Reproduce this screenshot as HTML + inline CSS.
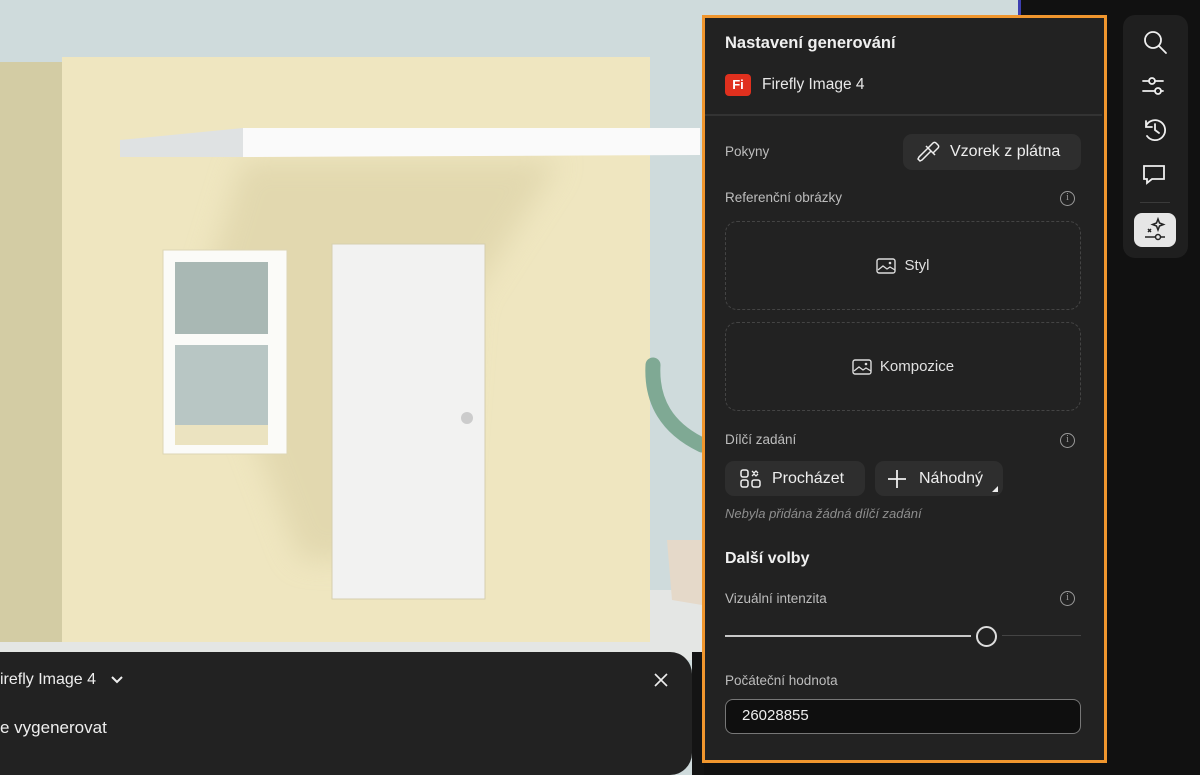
<!DOCTYPE html>
<html><head><meta charset="utf-8"><style>
*{margin:0;padding:0;box-sizing:border-box}
body{width:1200px;height:775px;overflow:hidden;background:#111;font-family:"Liberation Sans",sans-serif;position:relative;color:#e8e8e8}
.a{position:absolute}
.lbl{font-size:13.5px;color:#bdbdbd}
.info{width:15px;height:15px;border:1.3px solid #9a9a9a;border-radius:50%;font-size:10px;color:#9a9a9a;text-align:center;line-height:12px;font-family:"Liberation Serif",serif}
.btn{background:#2e2e2e;border-radius:9px;font-size:16px;color:#eee;display:flex;align-items:center}
.drop{border:1.5px dashed #444;border-radius:12px;display:flex;align-items:center;justify-content:center;font-size:15px;color:#e0e0e0;gap:8px}
</style></head><body>
<div class="a" style="left:700px;top:0;width:318px;height:20px;background:#cfdbdc"></div>
<svg class="a" style="left:0;top:0" width="702" height="775" viewBox="0 0 702 775">
<defs><filter id="b"><feGaussianBlur stdDeviation="14"/></filter></defs>
<rect width="702" height="775" fill="#cfdbdc"/>
<rect x="0" y="590" width="702" height="70" fill="#e4e6e4"/>
<rect x="0" y="62" width="64" height="580" fill="#d3cca4"/>
<rect x="62" y="57" width="588" height="585" fill="#efe6c0"/>
<polygon points="243,160 560,160 470,300 450,560 300,560 200,300" fill="#ddd3a8" opacity="0.7" filter="url(#b)"/>
<polygon points="120,140 243,128 243,157 120,157" fill="#dfe2e3"/>
<polygon points="243,128 700,128 700,155 243,157" fill="#fafafa"/>
<rect x="163" y="250" width="124" height="204" fill="#fbfbf8" stroke="#ddd6b5"/>
<rect x="175" y="262" width="93" height="72" fill="#a9b8b4"/>
<rect x="175" y="345" width="93" height="80" fill="#b8c6c4"/>
<rect x="175" y="425" width="93" height="20" fill="#ebe3c0"/>
<rect x="332" y="244" width="153" height="355" fill="#f2f2f1" stroke="#d6cfae"/>
<circle cx="467" cy="418" r="6" fill="#ccc"/>
<path d="M653 365 Q650 420 702 445" stroke="#7fa994" stroke-width="15" fill="none" stroke-linecap="round"/>
<path d="M667 540 L702 540 L702 605 L672 600 Z" fill="#e5d9c9"/>
<rect x="0" y="652" width="692" height="123" rx="22" fill="#222"/>
<rect x="0" y="652" width="40" height="123" fill="#222"/>
</svg>
<div class="a" style="left:692px;top:652px;width:12px;height:123px;background:#141414"></div>
<div class="a" style="left:1018px;top:0;width:3px;height:15px;background:#3d3fb0"></div>
<div class="a" style="left:0;top:671px;font-size:16px;color:#eee">irefly Image 4</div>
<svg class="a" style="left:110px;top:675px" width="14" height="10"><path d="M2 2 L7 7 L12 2" stroke="#eee" stroke-width="2" fill="none"/></svg>
<div class="a" style="left:0;top:718px;font-size:17px;color:#eee">e vygenerovat</div>
<svg class="a" style="left:653px;top:672px" width="16" height="16"><path d="M2 2L14 14M14 2L2 14" stroke="#eee" stroke-width="1.6"/></svg>

<div class="a" style="left:702px;top:15px;width:405px;height:748px;background:#222;border:3px solid #f0962e"></div>
<div class="a" style="left:725px;top:34px;font-size:16.5px;font-weight:bold;color:#f0f0f0">Nastavení generování</div>
<div class="a" style="left:725px;top:74px;width:26px;height:22px;background:#e0301e;border-radius:4px;color:#fff;font-weight:bold;font-size:13px;text-align:center;line-height:22px">Fi</div>
<div class="a" style="left:762px;top:76px;font-size:15.5px;color:#e8e8e8">Firefly Image 4</div>
<div class="a" style="left:705px;top:114px;width:397px;height:2px;background:#333"></div>
<div class="a lbl" style="left:725px;top:144px">Pokyny</div>
<div class="a btn" style="left:903px;top:134px;width:178px;height:36px;padding-left:14px;gap:9px">
<svg width="24" height="24" viewBox="0 0 24 24"><path d="M3 21l2-1 9-9-3-3-9 9-1 2z M11 8l5-5a2 2 0 0 1 3 0l2 2a2 2 0 0 1 0 3l-5 5z M9 6l9 9" stroke="#eee" stroke-width="1.5" fill="none"/></svg>Vzorek z plátna</div>
<div class="a lbl" style="left:725px;top:190px">Referenční obrázky</div>
<div class="a info" style="left:1060px;top:191px">i</div>
<div class="a drop" style="left:725px;top:221px;width:356px;height:89px"><svg width="20" height="16"><rect x="1" y="1" width="18" height="14" rx="2" stroke="#ddd" stroke-width="1.4" fill="none"/><path d="M2 12l5-4 4 3 3-2 5 3" stroke="#ddd" stroke-width="1.3" fill="none"/><circle cx="14" cy="5" r="1.3" fill="#ddd"/></svg>Styl</div>
<div class="a drop" style="left:725px;top:322px;width:356px;height:89px"><svg width="20" height="16"><rect x="1" y="1" width="18" height="14" rx="2" stroke="#ddd" stroke-width="1.4" fill="none"/><path d="M2 12l5-4 4 3 3-2 5 3" stroke="#ddd" stroke-width="1.3" fill="none"/><circle cx="14" cy="5" r="1.3" fill="#ddd"/></svg>Kompozice</div>
<div class="a lbl" style="left:725px;top:432px">Dílčí zadání</div>
<div class="a info" style="left:1060px;top:433px">i</div>
<div class="a btn" style="left:725px;top:461px;width:140px;height:35px;padding-left:15px;gap:10px"><svg width="22" height="20"><rect x="1" y="1" width="7" height="7" rx="2" stroke="#eee" stroke-width="1.5" fill="none"/><rect x="1" y="11" width="7" height="7" rx="2" stroke="#eee" stroke-width="1.5" fill="none"/><rect x="12" y="11" width="8" height="7" rx="2" stroke="#eee" stroke-width="1.5" fill="none"/><path d="M12 2l2 2 2-2 2 2M12 7l2-2 2 2 2-2" stroke="#eee" stroke-width="1.3" fill="none"/></svg>Procházet</div>
<div class="a btn" style="left:875px;top:461px;width:128px;height:35px;padding-left:12px;gap:12px"><svg width="20" height="20"><path d="M10 1v18M1 10h18" stroke="#eee" stroke-width="1.8"/></svg>Náhodný</div>
<div class="a" style="left:992px;top:486px;width:0;height:0;border-left:6px solid transparent;border-bottom:6px solid #eee"></div>
<div class="a" style="left:725px;top:506px;font-size:13px;font-style:italic;color:#8e8e8e">Nebyla přidána žádná dílčí zadání</div>
<div class="a" style="left:725px;top:550px;font-size:16px;font-weight:bold;color:#f0f0f0">Další volby</div>
<div class="a lbl" style="left:725px;top:591px">Vizuální intenzita</div>
<div class="a info" style="left:1060px;top:591px">i</div>
<div class="a" style="left:725px;top:635px;width:246px;height:2px;background:#c8c8c8"></div>
<div class="a" style="left:1002px;top:635px;width:79px;height:1px;background:#444"></div>
<div class="a" style="left:976px;top:626px;width:21px;height:21px;border:2.5px solid #ddd;border-radius:50%;background:#222"></div>
<div class="a lbl" style="left:725px;top:673px">Počáteční hodnota</div>
<div class="a" style="left:725px;top:699px;width:356px;height:35px;background:#0f0f0f;border:1px solid #777;border-radius:8px;font-size:15px;color:#eee;padding:7px 0 0 16px">26028855</div>

<div class="a" style="left:1123px;top:15px;width:65px;height:243px;background:#1f1f1f;border-radius:12px"></div>
<svg class="a" style="left:1140px;top:28px" width="30" height="230" viewBox="0 0 30 230">
<g stroke="#eee" stroke-width="1.8" fill="none" stroke-linecap="round">
<circle cx="13" cy="12" r="8"/><path d="M19 18l7 7"/>
<path d="M3 53h20M3 63h20"/><circle cx="12" cy="53" r="3" fill="#1f1f1f"/><circle cx="18" cy="63" r="3" fill="#1f1f1f"/>
<path d="M6 98a10 10 0 1 1 1 10M6 93v6h6M15 96v6l4 3"/>
<path d="M4 138h20v13h-12l-5 4v-4h-3z"/>
</g>
<rect x="-6" y="174" width="42" height="1" fill="#3a3a3a"/>
</svg>
<div class="a" style="left:1134px;top:213px;width:42px;height:34px;background:#e6e6e6;border-radius:8px"></div>
<svg class="a" style="left:1142px;top:217px" width="26" height="26" viewBox="0 0 26 26"><g stroke="#222" stroke-width="1.5" fill="none"><path d="M16 2l1.5 4 4 1.5-4 1.5-1.5 4-1.5-4-4-1.5 4-1.5z"/><path d="M6 12l3 3M9 12l-3 3"/><path d="M3 20h20"/><circle cx="16" cy="20" r="2.5" fill="#e6e6e6"/></g></svg>
</body></html>
